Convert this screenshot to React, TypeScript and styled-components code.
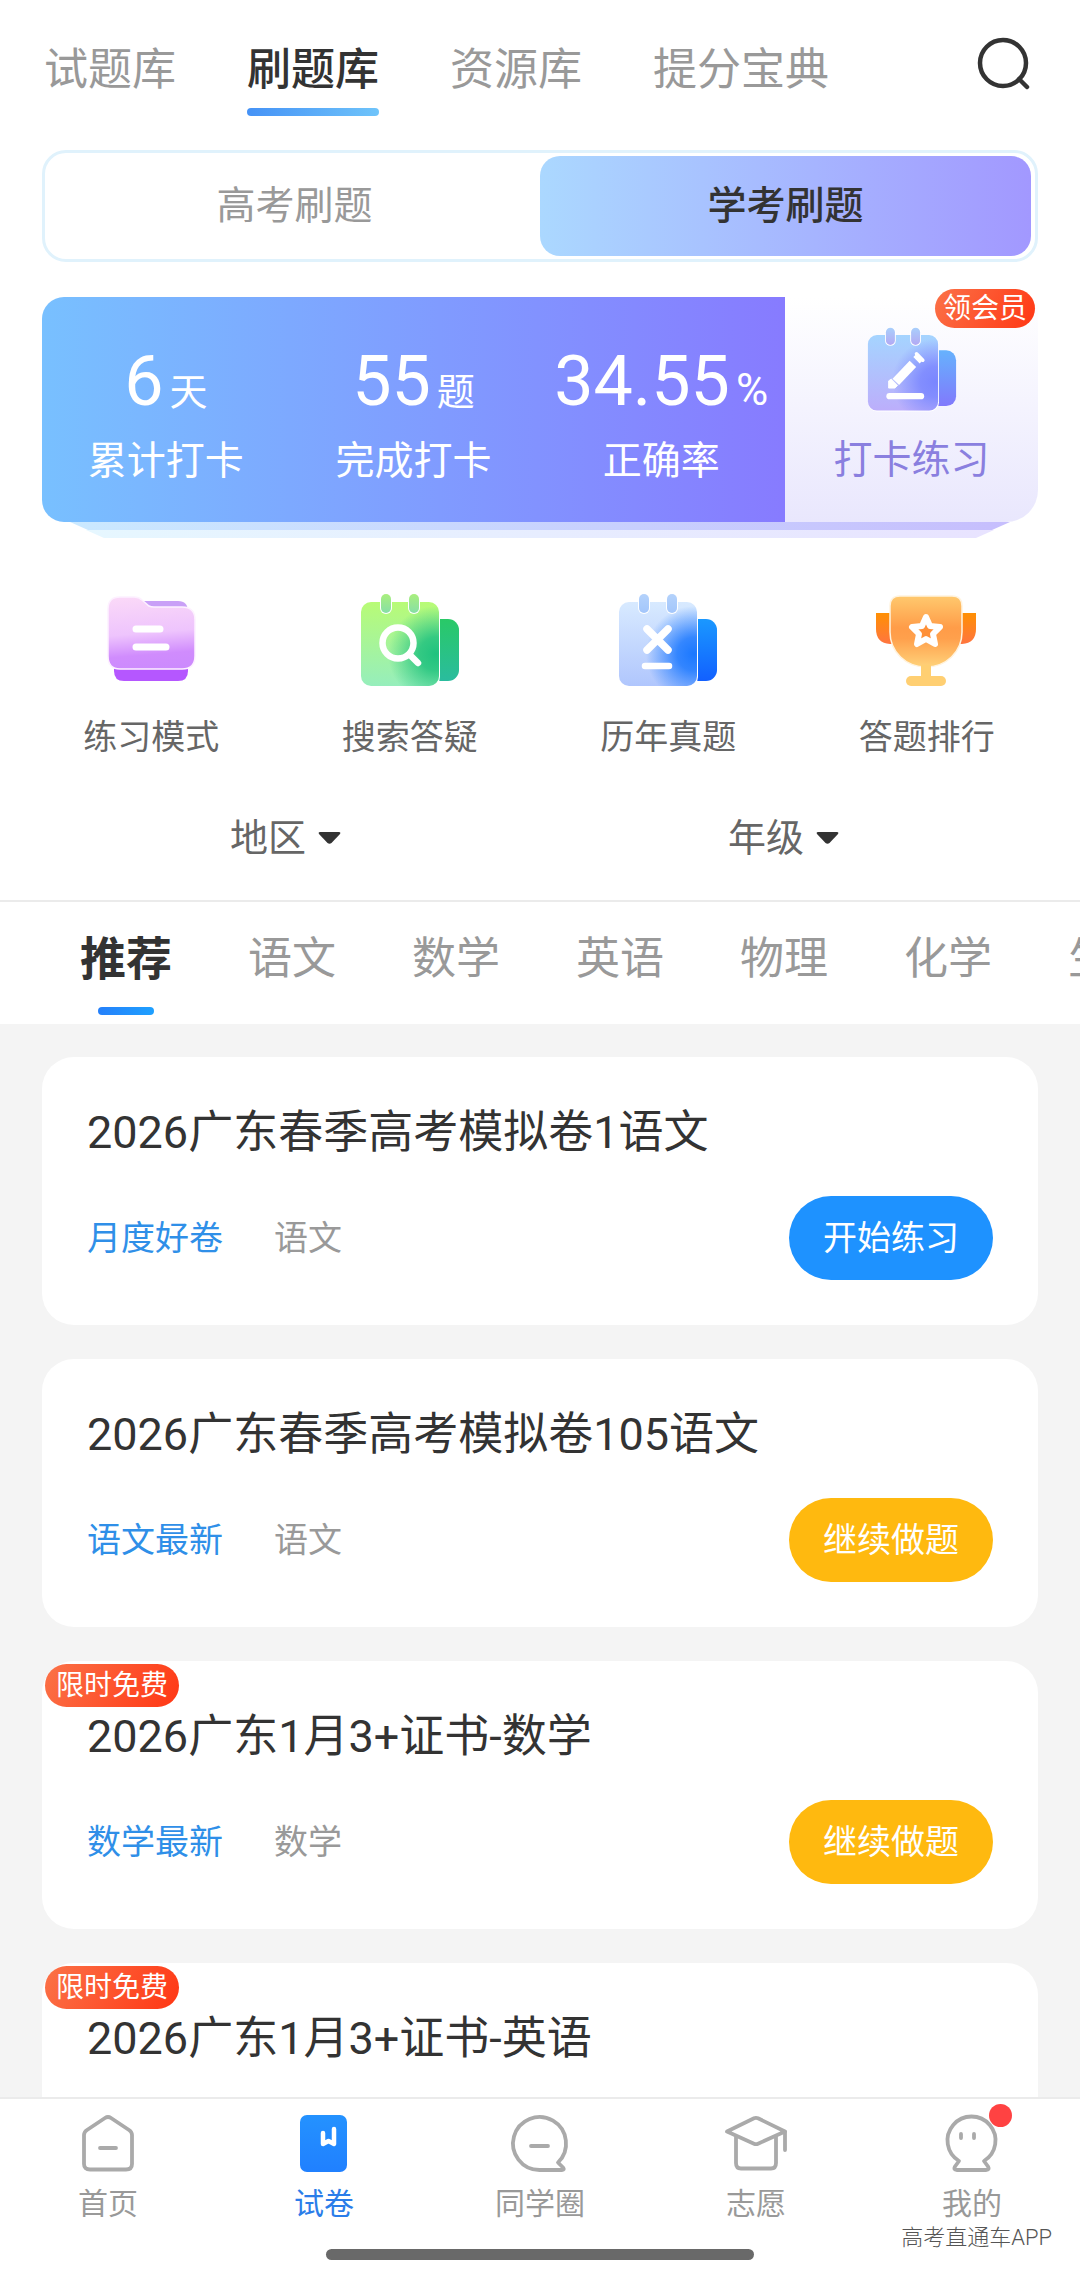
import { useState } from "react"
import type { ReactNode } from "react"
import styled, { createGlobalStyle } from "styled-components"

const GlobalStyle = createGlobalStyle`
  * {
    box-sizing: border-box;
  }
  body {
    margin: 0;
    background: #ffffff;
    font-family: Roboto, "Noto Sans CJK SC", sans-serif;
    color: #333333;
  }
  button, select {
    font-family: inherit;
    color: inherit;
    border: none;
    background: none;
    padding: 0;
    margin: 0;
    cursor: pointer;
  }
  svg {
    display: block;
    flex: none;
    overflow: visible;
  }
`

const Shell = styled.div`
  display: flex;
  flex-direction: column;
  height: 100vh;
`

const Content = styled.main`
  flex: 1;
  min-height: 0;
  overflow-y: auto;
  scrollbar-width: none;
`

const Header = styled.header`
  display: flex;
  justify-content: space-between;
  align-items: flex-start;
  padding: 38px 48px 0 44px;
`

const MainTabs = styled.nav`
  display: flex;
  gap: 71px;
`

const MainTab = styled.button<{ $active: boolean }>`
  font-size: 44px;
  line-height: 64px;
  white-space: nowrap;
  font-weight: ${(p) => (p.$active ? 500 : 400)};
  color: ${(p) => (p.$active ? "#333333" : "#999999")};
  &::after {
    content: "";
    display: block;
    height: 8px;
    margin-top: 6px;
    border-radius: 4px;
    background: ${(p) => (p.$active ? "linear-gradient(90deg, #4592f6, #6fc4fa)" : "none")};
  }
`

const Segment = styled.div`
  display: flex;
  margin: 34px 42px 0;
  padding: 3px 4px;
  border: 3px solid #e0f2fc;
  border-radius: 24px;
`

const SegmentButton = styled.button<{ $active: boolean }>`
  flex: 1;
  height: 100px;
  border-radius: 20px;
  font-size: 39px;
  line-height: 100px;
  font-weight: ${(p) => (p.$active ? 500 : 400)};
  color: ${(p) => (p.$active ? "#333333" : "#999999")};
  background: ${(p) => (p.$active ? "linear-gradient(90deg, #abd8ff, #a298ff)" : "none")};
`

const Summary = styled.section`
  margin: 35px 42px 0;
`

const SummaryCard = styled.div`
  display: flex;
  height: 225px;
`

const Stats = styled.div`
  flex: 743;
  display: grid;
  grid-template-columns: repeat(3, 1fr);
  border-radius: 22px 0 0 22px;
  background: linear-gradient(90deg, #78c0ff, #877bff);
  color: #ffffff;
`

const Stat = styled.div`
  display: flex;
  flex-direction: column;
  align-items: center;
  gap: 20px;
  padding-top: 48px;
`

const StatValue = styled.div`
  display: flex;
  align-items: baseline;
  gap: 6px;
  font-size: 70px;
  line-height: 72px;
`

const StatUnit = styled.span<{ $size: number }>`
  font-size: ${(p) => p.$size}px;
  line-height: 48px;
`

const StatLabel = styled.div`
  font-size: 39px;
  line-height: 48px;
`

const CheckIn = styled.button`
  flex: 253;
  position: relative;
  display: flex;
  flex-direction: column;
  align-items: center;
  gap: 22px;
  padding-top: 29px;
  border-radius: 0 0 32px 0;
  background: linear-gradient(180deg, #ffffff, #e9e7fd);
  font-size: 39px;
  line-height: 48px;
  color: #8a7fdf;
`

const Badge = styled.span`
  position: absolute;
  border-radius: 22px;
  background: linear-gradient(120deg, #fb7248, #ff3714);
  font-size: 28px;
  color: #ffffff;
`

const VipBadge = styled(Badge)`
  top: -8px;
  right: 3px;
  padding: 0 8px;
  line-height: 39px;
`

const FreeBadge = styled(Badge)`
  top: 3px;
  left: 3px;
  padding: 0 11px;
  line-height: 43px;
`

const StackEdge = styled.div<{ $inset: number; $from: string; $to: string }>`
  height: 8px;
  margin: 0 ${(p) => p.$inset}px;
  clip-path: polygon(0 0, 100% 0, calc(100% - 18px) 100%, 18px 100%);
  background: linear-gradient(90deg, ${(p) => p.$from}, ${(p) => p.$to});
`

const Features = styled.nav`
  display: flex;
  margin: 54px 24px 0 22px;
`

const Feature = styled.a`
  flex: 1;
  display: flex;
  flex-direction: column;
  align-items: center;
  gap: 24px;
  font-size: 34px;
  line-height: 46px;
  color: #666666;
  text-decoration: none;
`

const Filters = styled.div`
  display: flex;
  padding: 54px 42px 38px;
  border-bottom: 2px solid #ebebeb;
`

const Filter = styled.label`
  flex: 1;
  display: flex;
  justify-content: center;
  align-items: center;
  gap: 12px;
  padding-right: 10px;
`

const FilterSelect = styled.select`
  appearance: none;
  width: 76px;
  height: 48px;
  font-size: 38px;
  line-height: 48px;
  color: #666666;
`

const Subjects = styled.nav`
  display: flex;
  align-items: flex-start;
  gap: 76px;
  padding: 23px 0 9px 80px;
  overflow: hidden;
`

const Subject = styled.button<{ $active: boolean }>`
  flex: none;
  font-size: ${(p) => (p.$active ? 46 : 44)}px;
  font-weight: ${(p) => (p.$active ? 700 : 400)};
  line-height: 68px;
  color: ${(p) => (p.$active ? "#333333" : "#999999")};
  &::after {
    content: "";
    display: block;
    width: 56px;
    height: 8px;
    margin: 14px auto 0;
    border-radius: 4px;
    background: ${(p) => (p.$active ? "linear-gradient(90deg, #2580fa, #1ea0ff)" : "none")};
  }
`

const PaperList = styled.section`
  display: flex;
  flex-direction: column;
  gap: 34px;
  padding: 33px 42px;
  background: #f4f4f4;
`

const PaperCard = styled.article`
  position: relative;
  padding: 45px;
  border-radius: 32px;
  background: #ffffff;
`

const PaperTitle = styled.h2`
  margin: 0 0 32px;
  font-size: 45px;
  font-weight: 400;
  line-height: 62px;
`

const PaperMeta = styled.div`
  display: flex;
  align-items: center;
  gap: 51px;
  font-size: 34px;
  line-height: 84px;
  color: #999999;
`

const PaperTag = styled.span`
  color: #2f8fe8;
`

const PaperAction = styled.button<{ $resume: boolean }>`
  margin-left: auto;
  padding: 0 34px;
  border-radius: 42px;
  font-size: 34px;
  line-height: 84px;
  color: #ffffff;
  background: ${(p) => (p.$resume ? "#ffb90f" : "#1e92ff")};
`

const BottomBar = styled.footer`
  position: relative;
  border-top: 2px solid #ebebeb;
  padding: 14px 0 17px;
  background: #ffffff;
`

const BottomNav = styled.nav`
  display: flex;
`

const BottomLink = styled.a<{ $active: boolean }>`
  flex: 1;
  display: flex;
  flex-direction: column;
  align-items: center;
  gap: 8px;
  font-size: 30px;
  line-height: 46px;
  color: ${(p) => (p.$active ? "#2b7de9" : "#999999")};
  text-decoration: none;
`

const IconWrap = styled.span`
  position: relative;
`

const Dot = styled.span`
  position: absolute;
  top: -9px;
  right: -8px;
  width: 23px;
  height: 23px;
  border-radius: 50%;
  background: #ff4242;
`

const HomeBar = styled.div`
  width: 428px;
  height: 11px;
  margin: 22px auto 0;
  border-radius: 6px;
  background: #696969;
`

const Watermark = styled.span`
  position: absolute;
  right: 28px;
  bottom: 25px;
  font-size: 22px;
  font-weight: 300;
  line-height: 28px;
  color: #555555;
  text-shadow: -1px -1px 0 #ffffff;
`

type CalendarProps = {
  id: string
  size: number
  base: [string, string]
  glow: string
  back: [string, string]
  ring: [string, string]
  children: ReactNode
}

const CalendarIcon = ({ id, size, base, glow, back, ring, children }: CalendarProps) => (
  <svg width={size} viewBox="0 0 100 98" fill="none">
    <defs>
      <linearGradient id={`${id}-base`} x1="0" y1="0" x2="0" y2="1">
        <stop stopColor={base[0]} />
        <stop offset="1" stopColor={base[1]} />
      </linearGradient>
      <linearGradient id={`${id}-back`} x1="0" y1="0" x2="0" y2="1">
        <stop stopColor={back[0]} />
        <stop offset="1" stopColor={back[1]} />
      </linearGradient>
      <linearGradient id={`${id}-ring`} x1="0" y1="0" x2="0" y2="1">
        <stop stopColor={ring[0]} />
        <stop offset="1" stopColor={ring[1]} />
      </linearGradient>
      <radialGradient id={`${id}-glow`} gradientUnits="userSpaceOnUse" cx="76" cy="62" r="48">
        <stop stopColor={glow} />
        <stop offset="0.35" stopColor={glow} stopOpacity="0.85" />
        <stop offset="1" stopColor={glow} stopOpacity="0" />
      </radialGradient>
    </defs>
    <rect x="60" y="27" width="39" height="62" rx="11" fill={`url(#${id}-back)`} />
    <rect x="1" y="10" width="79" height="85" rx="10" fill="#ffffff" />
    <rect x="1" y="10" width="78" height="84" rx="10" fill={`url(#${id}-base)`} />
    <rect x="1" y="10" width="78" height="84" rx="10" fill={`url(#${id}-glow)`} />
    <rect x="20" y="1" width="12" height="21" rx="6" fill="#ffffff" />
    <rect x="48" y="1" width="12" height="21" rx="6" fill="#ffffff" />
    <rect x="21" y="2" width="10" height="19" rx="5" fill={`url(#${id}-ring)`} />
    <rect x="49" y="2" width="10" height="19" rx="5" fill={`url(#${id}-ring)`} />
    {children}
  </svg>
)

const CheckInIcon = () => (
  <CalendarIcon id="checkin" size={90} base={["#a5d4ff", "#bcaefb"]} glow="#7a86ff" back={["#66b2fd", "#8179fc"]} ring={["#a9cffc", "#b3a9f3"]}>
    <path d="M32 62 L51 42" stroke="#ffffff" strokeWidth="10" />
    <path d="M55 38 L59 34" stroke="#ffffff" strokeWidth="10" />
    <path d="M55 31 L62 38" stroke="#ffffff" strokeWidth="4" strokeLinecap="round" />
    <path d="M24 69 V61 L27 59 L34 66 L31 69 Z" fill="#ffffff" stroke="#ffffff" strokeWidth="1" strokeLinejoin="round" />
    <path d="M25 78 H60" stroke="#ffffff" strokeWidth="7" strokeLinecap="round" />
  </CalendarIcon>
)

const FolderIcon = () => (
  <svg width="100" viewBox="1 0 100 98" fill="none">
    <defs>
      <linearGradient id="folder-front" x1="0.4" y1="0" x2="0.5" y2="1">
        <stop stopColor="#fad8f8" />
        <stop offset="0.5" stopColor="#eec4fd" />
        <stop offset="0.8" stopColor="#d08cfd" />
        <stop offset="1" stopColor="#cc8afd" />
      </linearGradient>
    </defs>
    <path d="M40 9 H78 Q88 9 88 20 H46 Z" fill="#c9a0f7" />
    <path d="M14 70 H88 V79 Q88 89 78 89 H24 Q14 89 14 79 Z" fill="#b557ff" />
    <path
      d="M20 5 H34 Q39 5 42 8 L49 14 Q51 15 54 15 H82 Q95 15 95 28 V64 Q95 77 82 77 H20 Q8 77 8 64 V17 Q8 5 20 5 Z"
      fill="url(#folder-front)"
      stroke="#fdf1ff"
      strokeWidth="1.5"
    />
    <path d="M36 37 H60 M36 55 H66" stroke="#ffffff" strokeWidth="7" strokeLinecap="round" />
  </svg>
)

const SearchPaperIcon = () => (
  <CalendarIcon id="ask" size={100} base={["#b8fb76", "#96eebc"]} glow="#20c27e" back={["#29c967", "#2abc9e"]} ring={["#a9ef7d", "#86dfa6"]}>
    <circle cx="38" cy="51" r="15.5" stroke="#ffffff" strokeWidth="6.5" />
    <path d="M50 63 L58 71" stroke="#ffffff" strokeWidth="6.5" strokeLinecap="round" />
  </CalendarIcon>
)

const PastPaperIcon = () => (
  <CalendarIcon id="past" size={100} base={["#d8eaff", "#b0c6fd"]} glow="#1b78ff" back={["#1a98ff", "#1260ff"]} ring={["#b4d2fb", "#a3c6fb"]}>
    <path d="M29 37 L50 58 M50 37 L29 58" stroke="#ffffff" strokeWidth="7.5" strokeLinecap="round" />
    <path d="M27 74 H51" stroke="#ffffff" strokeWidth="6.5" strokeLinecap="round" />
  </CalendarIcon>
)

const TrophyIcon = () => (
  <svg width="100" viewBox="1 0 100 98" fill="none">
    <defs>
      <linearGradient id="trophy-cup" x1="0" y1="0" x2="0" y2="1">
        <stop stopColor="#ffc96e" />
        <stop offset="0.45" stopColor="#ff9c48" />
        <stop offset="0.6" stopColor="#ffa04c" />
        <stop offset="1" stopColor="#ffd27a" />
      </linearGradient>
      <linearGradient id="trophy-ear" x1="0" y1="0" x2="0" y2="1">
        <stop stopColor="#ff9003" />
        <stop offset="1" stopColor="#ff7540" />
      </linearGradient>
    </defs>
    <path d="M0 21 H16 V52 H14 Q0 51 0 37 Z" fill="url(#trophy-ear)" />
    <path d="M100 21 H84 V52 H86 Q100 51 100 37 Z" fill="url(#trophy-ear)" />
    <path
      d="M24 4 H76 Q86 4 86 14 V40 C86 60 70 75 50 75 C30 75 14 60 14 40 V14 Q14 4 24 4 Z"
      fill="url(#trophy-cup)"
      stroke="#fff3df"
      strokeWidth="1.5"
    />
    <path d="M45 73 H55 V86 H45 Z" fill="#ffcf72" />
    <rect x="30" y="84" width="40" height="10" rx="5" fill="#ffcf72" />
    <path
      d="M50 25 L54 34 L64 35 L57 42 L59 52 L50 47 L41 52 L43 42 L36 35 L46 34 Z"
      fill="#ff9038"
      stroke="#ffffff"
      strokeWidth="6"
      strokeLinejoin="round"
    />
  </svg>
)

const NavIcon = ({ children }: { children: ReactNode }) => (
  <svg width="64" height="60" viewBox="0 0 64 60" fill="none" stroke="#aaaaaa" strokeWidth="3.8" strokeLinecap="round" strokeLinejoin="round">
    {children}
  </svg>
)

const HomeIcon = () => (
  <NavIcon>
    <path d="M29 5 Q32 3 35 5 L53 17 Q56 19 56 22 V51 Q56 56.500 50 56.500 H14 Q8 56.500 8 51 V22 Q8 19 11 17 Z" />
    <path d="M24 35 H40" />
  </NavIcon>
)

const BookIcon = () => (
  <NavIcon>
    <defs>
      <linearGradient id="book" x1="0" y1="0" x2="0" y2="1">
        <stop stopColor="#2492ff" />
        <stop offset="1" stopColor="#2080ff" />
      </linearGradient>
    </defs>
    <rect x="8" y="2" width="47" height="57" rx="7" fill="url(#book)" stroke="none" />
    <path d="M31 20 V31 L36.500 28 L42 31 V16" stroke="#ffffff" strokeWidth="4.500" />
  </NavIcon>
)

const ChatIcon = () => (
  <NavIcon>
    <path d="M31.500 57 H54 Q57 57 55 54.500 L50 49.500 A26.500 26.500 0 1 0 31.500 57" />
    <path d="M23 33 H40" />
  </NavIcon>
)

const CapIcon = () => (
  <NavIcon>
    <path d="M3 18.500 L30 5.300 Q32 4.300 34 5.300 L61 18.500 L34 30.700 Q32 31.700 30 30.700 Z" />
    <path d="M12 24 V50 Q12 55.500 17 55.500 H47 Q52 55.500 52 50 V24 M61 19 V37" />
  </NavIcon>
)

const FaceIcon = () => (
  <NavIcon>
    <path d="M19 48 A24 24 0 1 1 44 48 L48 53.500 Q50 57 46 57 H17 Q13 57 15 53.500 Z" />
    <path d="M21 21 V25 M34 21 V25" />
  </NavIcon>
)

const mainTabs = ["试题库", "刷题库", "资源库", "提分宝典"]
const modes = ["高考刷题", "学考刷题"]
const subjects = ["推荐", "语文", "数学", "英语", "物理", "化学", "生物"]

const stats = [
  { value: "6", unit: "天", unitSize: 38, label: "累计打卡" },
  { value: "55", unit: "题", unitSize: 38, label: "完成打卡" },
  { value: "34.55", unit: "%", unitSize: 44, label: "正确率" },
]

const features = [
  { label: "练习模式", icon: <FolderIcon /> },
  { label: "搜索答疑", icon: <SearchPaperIcon /> },
  { label: "历年真题", icon: <PastPaperIcon /> },
  { label: "答题排行", icon: <TrophyIcon /> },
]

const papers = [
  { title: "2026广东春季高考模拟卷1语文", tag: "月度好卷", subject: "语文", started: false, free: false },
  { title: "2026广东春季高考模拟卷105语文", tag: "语文最新", subject: "语文", started: true, free: false },
  { title: "2026广东1月3+证书-数学", tag: "数学最新", subject: "数学", started: true, free: true },
  { title: "2026广东1月3+证书-英语", tag: "英语最新", subject: "英语", started: true, free: true },
]

const bottomLinks = [
  { label: "首页", icon: <HomeIcon /> },
  { label: "试卷", icon: <BookIcon /> },
  { label: "同学圈", icon: <ChatIcon /> },
  { label: "志愿", icon: <CapIcon /> },
  { label: "我的", icon: <FaceIcon />, dot: true },
]

export default function App() {
  const [tab, setTab] = useState("刷题库")
  const [mode, setMode] = useState("学考刷题")
  const [subject, setSubject] = useState("推荐")

  return (
    <Shell>
      <GlobalStyle />
      <Content>
        <Header>
          <MainTabs>
            {mainTabs.map((name) => (
              <MainTab key={name} $active={name === tab} onClick={() => setTab(name)}>{name}</MainTab>
            ))}
          </MainTabs>
          <button aria-label="搜索">
            <svg width="54" height="54" viewBox="0 0 54 54" fill="none" stroke="#333333" strokeWidth="4.500">
              <circle cx="25" cy="25" r="23" />
              <path d="M41 41 L49 49" strokeLinecap="round" />
            </svg>
          </button>
        </Header>

        <Segment>
          {modes.map((name) => (
            <SegmentButton key={name} $active={name === mode} onClick={() => setMode(name)}>{name}</SegmentButton>
          ))}
        </Segment>

        <Summary>
          <SummaryCard>
            <Stats>
              {stats.map((s) => (
                <Stat key={s.label}>
                  <StatValue>
                    {s.value}
                    <StatUnit $size={s.unitSize}>{s.unit}</StatUnit>
                  </StatValue>
                  <StatLabel>{s.label}</StatLabel>
                </Stat>
              ))}
            </Stats>
            <CheckIn>
              <CheckInIcon />
              打卡练习
              <VipBadge>领会员</VipBadge>
            </CheckIn>
          </SummaryCard>
          <StackEdge $inset={28} $from="#cbe9ff" $to="#c6befd" />
          <StackEdge $inset={44} $from="#e6f7ff" $to="#e8e3ff" />
        </Summary>

        <Features>
          {features.map((f) => (
            <Feature key={f.label} href="#">
              {f.icon}
              {f.label}
            </Feature>
          ))}
        </Features>

        <Filters>
          {["地区", "年级"].map((name) => (
            <Filter key={name}>
              <FilterSelect aria-label={name}>
                <option>{name}</option>
              </FilterSelect>
              <svg width="24" height="12" viewBox="0 0 24 12">
                <path d="M2 0 H21 Q23 0 22 2 L13.500 11 Q11.500 12.500 9.500 11 L1 2 Q0 0 2 0 Z" fill="#333333" />
              </svg>
            </Filter>
          ))}
        </Filters>

        <Subjects>
          {subjects.map((name) => (
            <Subject key={name} $active={name === subject} onClick={() => setSubject(name)}>{name}</Subject>
          ))}
        </Subjects>

        <PaperList>
          {papers.map((p) => (
            <PaperCard key={p.title}>
              {p.free && <FreeBadge>限时免费</FreeBadge>}
              <PaperTitle>{p.title}</PaperTitle>
              <PaperMeta>
                <PaperTag>{p.tag}</PaperTag>
                <span>{p.subject}</span>
                <PaperAction $resume={p.started}>{p.started ? "继续做题" : "开始练习"}</PaperAction>
              </PaperMeta>
            </PaperCard>
          ))}
        </PaperList>
      </Content>

      <BottomBar>
        <BottomNav>
          {bottomLinks.map((l) => (
            <BottomLink key={l.label} href="#" $active={l.label === "试卷"}>
              <IconWrap>
                {l.icon}
                {l.dot && <Dot />}
              </IconWrap>
              {l.label}
            </BottomLink>
          ))}
        </BottomNav>
        <HomeBar />
        <Watermark>高考直通车APP</Watermark>
      </BottomBar>
    </Shell>
  )
}
